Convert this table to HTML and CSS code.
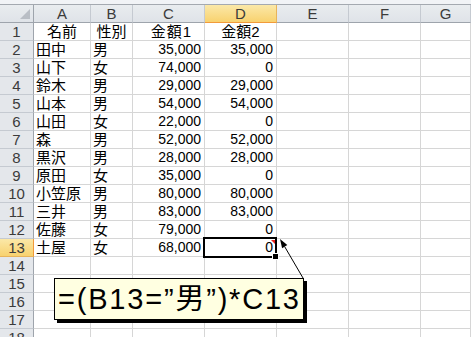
FILE: index.html
```html
<!DOCTYPE html>
<html lang="ja">
<head>
<meta charset="utf-8">
<link rel="stylesheet" href="styles.css">
</head>
<body>
<div class="sheet">
  <div class="topbar"></div>
  <div class="grid">
    <div class="ch corner"><svg width="12" height="12" viewBox="0 0 12 12"><polygon points="11,1 11,11 1,11" fill="#b9bec5"/></svg></div>
    <div class="ch">A</div><div class="ch">B</div><div class="ch">C</div><div class="ch sel">D</div><div class="ch">E</div><div class="ch">F</div><div class="ch">G</div>

    <div class="rh">1</div><div class="c ctr">名前</div><div class="c ctr">性別</div><div class="c ctr hc">金額1</div><div class="c ctr">金額2</div><div class="c"></div><div class="c"></div><div class="c"></div>
    <div class="rh">2</div><div class="c">田中</div><div class="c">男</div><div class="c num">35,000</div><div class="c num">35,000</div><div class="c"></div><div class="c"></div><div class="c"></div>
    <div class="rh">3</div><div class="c">山下</div><div class="c">女</div><div class="c num">74,000</div><div class="c num">0</div><div class="c"></div><div class="c"></div><div class="c"></div>
    <div class="rh">4</div><div class="c">鈴木</div><div class="c">男</div><div class="c num">29,000</div><div class="c num">29,000</div><div class="c"></div><div class="c"></div><div class="c"></div>
    <div class="rh">5</div><div class="c">山本</div><div class="c">男</div><div class="c num">54,000</div><div class="c num">54,000</div><div class="c"></div><div class="c"></div><div class="c"></div>
    <div class="rh">6</div><div class="c">山田</div><div class="c">女</div><div class="c num">22,000</div><div class="c num">0</div><div class="c"></div><div class="c"></div><div class="c"></div>
    <div class="rh">7</div><div class="c">森</div><div class="c">男</div><div class="c num">52,000</div><div class="c num">52,000</div><div class="c"></div><div class="c"></div><div class="c"></div>
    <div class="rh">8</div><div class="c">黒沢</div><div class="c">男</div><div class="c num">28,000</div><div class="c num">28,000</div><div class="c"></div><div class="c"></div><div class="c"></div>
    <div class="rh">9</div><div class="c">原田</div><div class="c">女</div><div class="c num">35,000</div><div class="c num">0</div><div class="c"></div><div class="c"></div><div class="c"></div>
    <div class="rh">10</div><div class="c">小笠原</div><div class="c">男</div><div class="c num">80,000</div><div class="c num">80,000</div><div class="c"></div><div class="c"></div><div class="c"></div>
    <div class="rh">11</div><div class="c">三井</div><div class="c">男</div><div class="c num">83,000</div><div class="c num">83,000</div><div class="c"></div><div class="c"></div><div class="c"></div>
    <div class="rh">12</div><div class="c">佐藤</div><div class="c">女</div><div class="c num">79,000</div><div class="c num">0</div><div class="c"></div><div class="c"></div><div class="c"></div>
    <div class="rh sel">13</div><div class="c">土屋</div><div class="c">女</div><div class="c num">68,000</div><div class="c num active">0<span class="selbox"></span><span class="flag"></span><span class="handle"></span></div><div class="c"></div><div class="c"></div><div class="c"></div>
    <div class="rh">14</div><div class="c"></div><div class="c"></div><div class="c"></div><div class="c"></div><div class="c"></div><div class="c"></div><div class="c"></div>
    <div class="rh">15</div><div class="c"></div><div class="c"></div><div class="c"></div><div class="c"></div><div class="c"></div><div class="c"></div><div class="c"></div>
    <div class="rh">16</div><div class="c"></div><div class="c"></div><div class="c"></div><div class="c"></div><div class="c"></div><div class="c"></div><div class="c"></div>
    <div class="rh">17</div><div class="c"></div><div class="c"></div><div class="c"></div><div class="c"></div><div class="c"></div><div class="c"></div><div class="c"></div>
    <div class="rh">18</div><div class="c"></div><div class="c"></div><div class="c"></div><div class="c"></div><div class="c"></div><div class="c"></div><div class="c"></div>
  </div>
  <svg class="arrow" width="471" height="337" viewBox="0 0 471 337">
    <line x1="303" y1="278" x2="284.7" y2="246.7" stroke="#000" stroke-width="1"/>
    <polygon points="280,239 287.3,245.1 282.1,248.3" fill="#000"/>
  </svg>
  <div class="comment">=(B13=”男”)*C13</div>
</div>
</body>
</html>
```
FILE: styles.css
```css
html, body {
  margin: 0;
  padding: 0;
  background: #ffffff;
  overflow: hidden;
}
.sheet {
  position: relative;
  width: 471px;
  height: 337px;
  overflow: hidden;
  font-family: "Liberation Sans", "Noto Sans CJK JP", sans-serif;
  color: #000;
}
.topbar {
  height: 4px;
  background: #f1f3f6;
  border-bottom: 1px solid #a4a9b0;
}
.grid {
  display: grid;
  grid-template-columns: 34px 57px 42px 72px 72px 72px 72px 1fr;
  grid-auto-rows: 18px;
}
.ch, .rh, .c {
  box-sizing: border-box;
  display: flex;
  align-items: center;
  white-space: nowrap;
}
.ch {
  background: linear-gradient(#e9ecef, #dfe3e8);
  border-right: 1px solid #c5cad1;
  border-bottom: 1px solid #9ea4ac;
  justify-content: center;
  font-size: 15px;
  color: #3b3b3b;
}
.ch.corner {
  border-right: 1px solid #9ea4ac;
  justify-content: flex-end;
  align-items: flex-end;
  padding: 0 2px 2px 0;
}
.ch.corner svg { display: block; }
.ch.sel {
  background: linear-gradient(#fbe8a8, #f8d26f);
  border-right: 1px solid #e8b45a;
  border-bottom: 1px solid #f29a3a;
}
.rh {
  background: #e4e7eb;
  border-right: 1px solid #9ea4ac;
  border-bottom: 1px solid #c5cad1;
  justify-content: center;
  font-size: 15px;
  color: #3b3b3b;
}
.rh.sel {
  background: linear-gradient(#fbe8a8, #f8d26f);
  border-right: 1px solid #f29a3a;
  border-bottom: 1px solid #e8b45a;
}
.c {
  border-right: 1px solid #d6d6d6;
  border-bottom: 1px solid #d6d6d6;
  font-size: 15px;
  padding: 0 2px;
  line-height: 17px;
}
.c.ctr { justify-content: center; }
.c.hc { padding-left: 8px; letter-spacing: 1px; }
.c.num {
  justify-content: flex-end;
  font-size: 14px;
  padding-right: 3px;
}
.c.active { position: relative; }
.selbox {
  position: absolute;
  left: -2px;
  top: -2px;
  right: -1px;
  bottom: -2px;
  border: 2px solid #000;
  box-shadow: inset 0 0 0 1px #fff;
}
.flag {
  position: absolute;
  right: 1px;
  top: 1px;
  width: 0;
  height: 0;
  border-top: 4px solid #e8221c;
  border-left: 4px solid transparent;
}
.handle {
  position: absolute;
  right: -3px;
  bottom: -4px;
  width: 5px;
  height: 5px;
  background: #000;
  border: 1px solid #fff;
}
.arrow {
  position: absolute;
  left: 0;
  top: 0;
  pointer-events: none;
}
.comment {
  position: absolute;
  left: 54px;
  top: 278px;
  width: 250px;
  height: 42px;
  box-sizing: border-box;
  background: #ffffe1;
  border: 1px solid #000;
  box-shadow: 3px 3px 0 #000;
  font-family: "Liberation Sans", "Noto Sans CJK JP", sans-serif;
  font-size: 29px;
  letter-spacing: 1.8px;
  line-height: 40px;
  padding-left: 3px;
  white-space: nowrap;
  overflow: hidden;
}
```
